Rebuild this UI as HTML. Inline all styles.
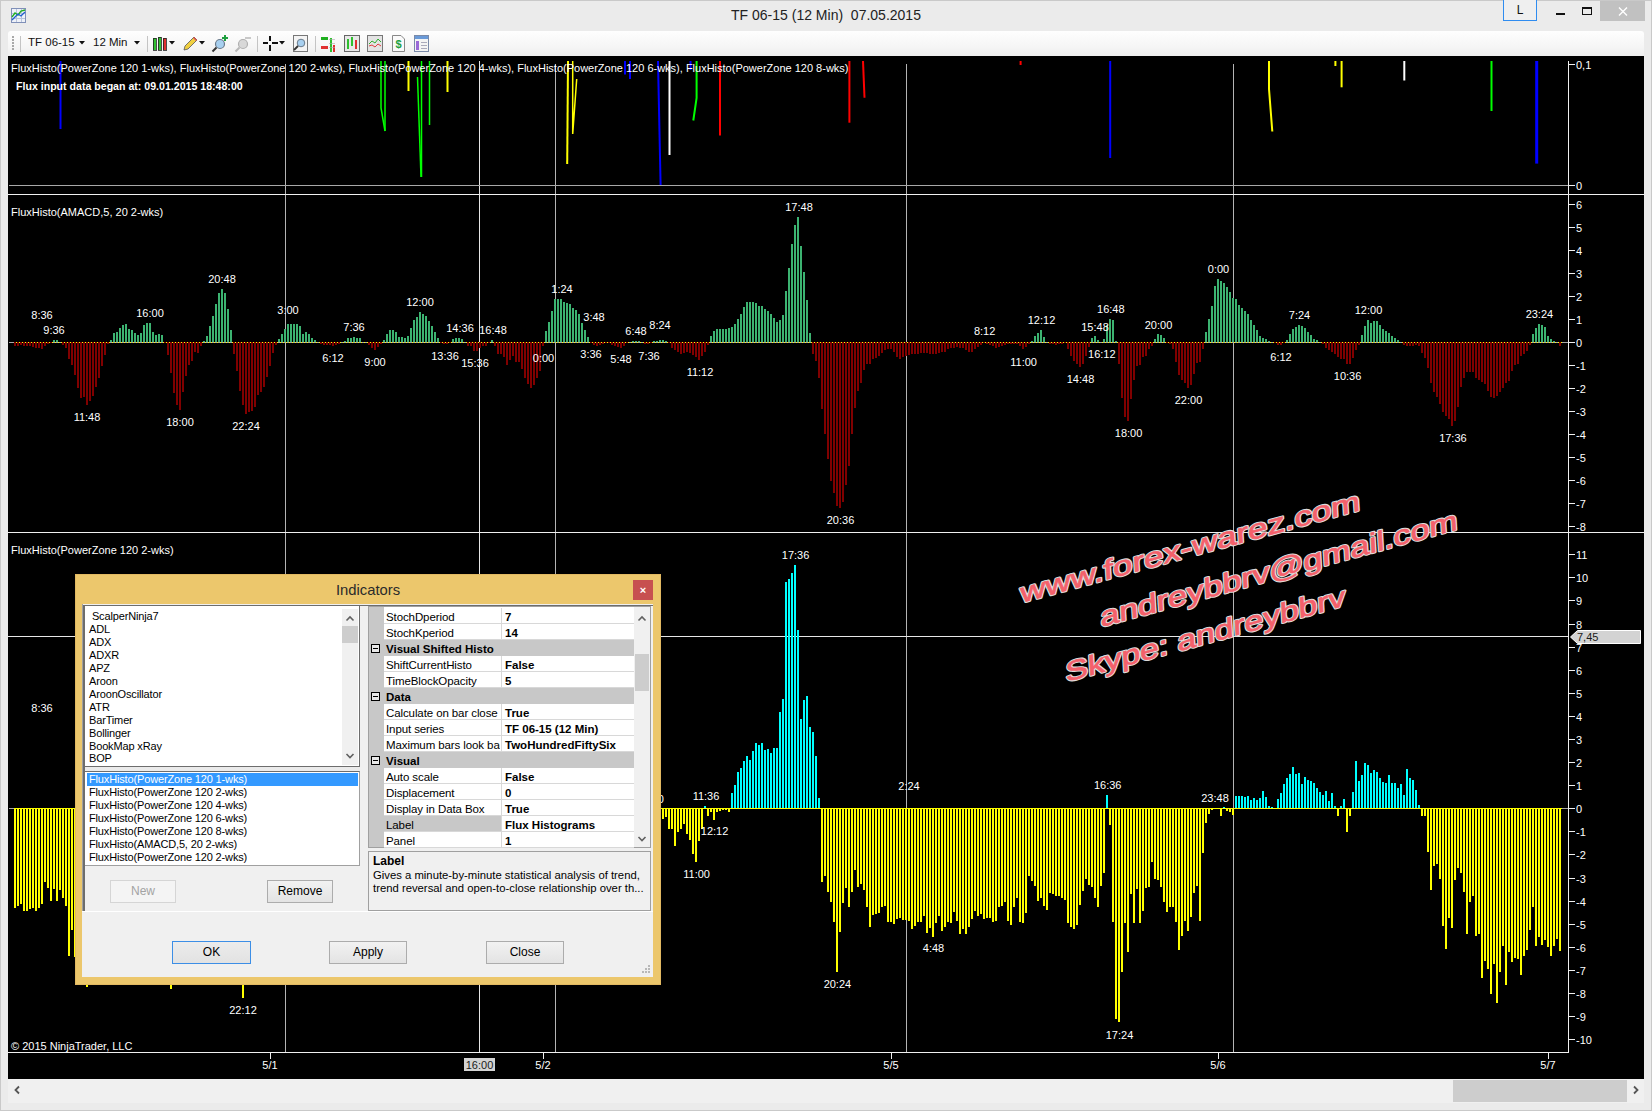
<!DOCTYPE html>
<html><head><meta charset="utf-8">
<style>
* { box-sizing: border-box; }
html, body { margin:0; padding:0; }
body { width:1652px; height:1111px; overflow:hidden; position:relative; background:#ebebeb; font-family:"Liberation Sans", sans-serif; }
.t { font-family:"Liberation Sans", sans-serif; font-size:11px; fill:#ffffff; }
.abs { position:absolute; }
.tx { white-space:nowrap; line-height:1.15; }
</style></head><body>
<svg width="1652" height="1111" viewBox="0 0 1652 1111" style="position:absolute;left:0;top:0" shape-rendering="crispEdges">
<rect x="8" y="56" width="1636" height="1023" fill="#000"/>
<rect x="285" y="64" width="1" height="988" fill="#b4b4b4"/>
<rect x="555" y="64" width="1" height="988" fill="#b4b4b4"/>
<rect x="906" y="64" width="1" height="988" fill="#b4b4b4"/>
<rect x="1233" y="64" width="1" height="988" fill="#b4b4b4"/>
<rect x="479" y="61" width="1" height="991" fill="#e6e6e6"/>
<rect x="8" y="636" width="1560" height="1" fill="#e6e6e6"/>
<rect x="8" y="194" width="1636" height="1" fill="#f0f0f0"/>
<rect x="8" y="532" width="1636" height="1" fill="#f0f0f0"/>
<rect x="8" y="1052" width="1561" height="1" fill="#f0f0f0"/>
<rect x="1568" y="61" width="1" height="992" fill="#f0f0f0"/>
<rect x="9" y="185" width="1559" height="1" fill="#a8a8a8"/>
<rect x="9" y="342" width="1559" height="1" fill="#a8a8a8"/>
<rect x="9" y="808" width="1559" height="1" fill="#a8a8a8"/>
<line x1="14" y1="342.5" x2="1562" y2="342.5" stroke="#ffff00" stroke-width="1" stroke-dasharray="1 2" stroke-dashoffset="-2"/>
<rect x="14" y="808" width="1548" height="1" fill="#ffff00"/>
<path d="M53 340h2V342h-2zM56 340h2V342h-2zM110 340h2V342h-2zM113 333h2V342h-2zM116 332h2V342h-2zM119 328h2V342h-2zM122 325h2V342h-2zM125 324h2V342h-2zM128 329h2V342h-2zM131 330h2V342h-2zM134 333h2V342h-2zM137 335h2V342h-2zM140 333h2V342h-2zM143 325h2V342h-2zM146 323h2V342h-2zM149 323h2V342h-2zM152 332h2V342h-2zM155 335h2V342h-2zM158 334h2V342h-2zM161 335h2V342h-2zM203 341h2V342h-2zM206 336h2V342h-2zM209 326h2V342h-2zM212 316h2V342h-2zM215 304h2V342h-2zM218 293h2V342h-2zM221 289h2V342h-2zM224 293h2V342h-2zM227 309h2V342h-2zM230 330h2V342h-2zM278 339h2V342h-2zM281 334h2V342h-2zM284 329h2V342h-2zM287 324h2V342h-2zM290 324h2V342h-2zM293 324h2V342h-2zM296 324h2V342h-2zM299 326h2V342h-2zM302 334h2V342h-2zM305 332h2V342h-2zM308 334h2V342h-2zM311 338h2V342h-2zM314 340h2V342h-2zM344 341h2V342h-2zM347 338h2V342h-2zM350 338h2V342h-2zM353 337h2V342h-2zM356 338h2V342h-2zM359 338h2V342h-2zM383 340h2V342h-2zM386 334h2V342h-2zM389 330h2V342h-2zM392 330h2V342h-2zM395 332h2V342h-2zM398 337h2V342h-2zM401 337h2V342h-2zM404 338h2V342h-2zM407 336h2V342h-2zM410 328h2V342h-2zM413 320h2V342h-2zM416 317h2V342h-2zM419 312h2V342h-2zM422 314h2V342h-2zM425 316h2V342h-2zM428 321h2V342h-2zM431 326h2V342h-2zM434 332h2V342h-2zM437 338h2V342h-2zM452 339h2V342h-2zM455 338h2V342h-2zM458 338h2V342h-2zM461 339h2V342h-2zM491 340h2V342h-2zM545 331h2V342h-2zM548 322h2V342h-2zM551 311h2V342h-2zM554 299h2V342h-2zM557 299h2V342h-2zM560 299h2V342h-2zM563 302h2V342h-2zM566 303h2V342h-2zM569 304h2V342h-2zM572 308h2V342h-2zM575 310h2V342h-2zM578 314h2V342h-2zM581 323h2V342h-2zM584 330h2V342h-2zM587 337h2V342h-2zM632 341h2V342h-2zM635 341h2V342h-2zM638 341h2V342h-2zM653 341h2V342h-2zM656 341h2V342h-2zM659 340h2V342h-2zM662 340h2V342h-2zM665 341h2V342h-2zM710 336h2V342h-2zM713 331h2V342h-2zM716 329h2V342h-2zM719 329h2V342h-2zM722 329h2V342h-2zM725 329h2V342h-2zM728 328h2V342h-2zM731 327h2V342h-2zM734 324h2V342h-2zM737 319h2V342h-2zM740 314h2V342h-2zM743 307h2V342h-2zM746 302h2V342h-2zM749 302h2V342h-2zM752 302h2V342h-2zM755 303h2V342h-2zM758 306h2V342h-2zM761 306h2V342h-2zM764 309h2V342h-2zM767 311h2V342h-2zM770 314h2V342h-2zM773 318h2V342h-2zM776 322h2V342h-2zM779 320h2V342h-2zM782 315h2V342h-2zM785 291h2V342h-2zM788 268h2V342h-2zM791 244h2V342h-2zM794 225h2V342h-2zM797 217h2V342h-2zM800 246h2V342h-2zM803 272h2V342h-2zM806 300h2V342h-2zM809 333h2V342h-2zM1031 341h2V342h-2zM1034 336h2V342h-2zM1037 333h2V342h-2zM1040 330h2V342h-2zM1043 337h2V342h-2zM1091 338h2V342h-2zM1094 336h2V342h-2zM1097 340h2V342h-2zM1103 339h2V342h-2zM1106 325h2V342h-2zM1109 319h2V342h-2zM1112 320h2V342h-2zM1115 341h2V342h-2zM1154 339h2V342h-2zM1157 334h2V342h-2zM1160 335h2V342h-2zM1163 338h2V342h-2zM1205 332h2V342h-2zM1208 319h2V342h-2zM1211 306h2V342h-2zM1214 286h2V342h-2zM1217 279h2V342h-2zM1220 281h2V342h-2zM1223 283h2V342h-2zM1226 287h2V342h-2zM1229 292h2V342h-2zM1232 298h2V342h-2zM1235 299h2V342h-2zM1238 305h2V342h-2zM1241 308h2V342h-2zM1244 311h2V342h-2zM1247 314h2V342h-2zM1250 320h2V342h-2zM1253 325h2V342h-2zM1256 330h2V342h-2zM1259 336h2V342h-2zM1262 338h2V342h-2zM1265 339h2V342h-2zM1268 341h2V342h-2zM1286 340h2V342h-2zM1289 334h2V342h-2zM1292 329h2V342h-2zM1295 327h2V342h-2zM1298 325h2V342h-2zM1301 326h2V342h-2zM1304 328h2V342h-2zM1307 332h2V342h-2zM1310 335h2V342h-2zM1313 339h2V342h-2zM1316 340h2V342h-2zM1361 335h2V342h-2zM1364 326h2V342h-2zM1367 320h2V342h-2zM1370 323h2V342h-2zM1373 321h2V342h-2zM1376 321h2V342h-2zM1379 325h2V342h-2zM1382 329h2V342h-2zM1385 331h2V342h-2zM1388 333h2V342h-2zM1391 336h2V342h-2zM1394 338h2V342h-2zM1397 340h2V342h-2zM1532 334h2V342h-2zM1535 328h2V342h-2zM1538 324h2V342h-2zM1541 325h2V342h-2zM1544 327h2V342h-2zM1547 336h2V342h-2zM1550 339h2V342h-2zM1553 341h2V342h-2z" fill="#3cb371"/>
<path d="M14 342h2V346h-2zM17 342h2V346h-2zM20 342h2V345h-2zM23 342h2V346h-2zM26 342h2V346h-2zM29 342h2V346h-2zM32 342h2V347h-2zM35 342h2V348h-2zM38 342h2V348h-2zM41 342h2V349h-2zM44 342h2V346h-2zM47 342h2V344h-2zM50 342h2V343h-2zM62 342h2V345h-2zM65 342h2V348h-2zM68 342h2V359h-2zM71 342h2V365h-2zM74 342h2V375h-2zM77 342h2V388h-2zM80 342h2V398h-2zM83 342h2V397h-2zM86 342h2V405h-2zM89 342h2V401h-2zM92 342h2V396h-2zM95 342h2V387h-2zM98 342h2V378h-2zM101 342h2V366h-2zM104 342h2V355h-2zM107 342h2V344h-2zM164 342h2V343h-2zM167 342h2V355h-2zM170 342h2V373h-2zM173 342h2V393h-2zM176 342h2V405h-2zM179 342h2V410h-2zM182 342h2V392h-2zM185 342h2V376h-2zM188 342h2V365h-2zM191 342h2V361h-2zM194 342h2V352h-2zM197 342h2V353h-2zM200 342h2V346h-2zM233 342h2V354h-2zM236 342h2V371h-2zM239 342h2V391h-2zM242 342h2V405h-2zM245 342h2V414h-2zM248 342h2V412h-2zM251 342h2V411h-2zM254 342h2V407h-2zM257 342h2V395h-2zM260 342h2V392h-2zM263 342h2V387h-2zM266 342h2V377h-2zM269 342h2V366h-2zM272 342h2V353h-2zM275 342h2V345h-2zM320 342h2V344h-2zM323 342h2V345h-2zM326 342h2V345h-2zM329 342h2V345h-2zM332 342h2V346h-2zM335 342h2V345h-2zM338 342h2V344h-2zM368 342h2V345h-2zM371 342h2V348h-2zM374 342h2V350h-2zM377 342h2V347h-2zM380 342h2V344h-2zM440 342h2V343h-2zM443 342h2V344h-2zM446 342h2V344h-2zM449 342h2V343h-2zM467 342h2V346h-2zM470 342h2V346h-2zM473 342h2V351h-2zM476 342h2V351h-2zM479 342h2V348h-2zM482 342h2V346h-2zM485 342h2V346h-2zM488 342h2V343h-2zM494 342h2V346h-2zM497 342h2V354h-2zM500 342h2V354h-2zM503 342h2V357h-2zM506 342h2V365h-2zM509 342h2V360h-2zM512 342h2V356h-2zM515 342h2V362h-2zM518 342h2V362h-2zM521 342h2V369h-2zM524 342h2V378h-2zM527 342h2V384h-2zM530 342h2V388h-2zM533 342h2V385h-2zM536 342h2V378h-2zM539 342h2V371h-2zM542 342h2V346h-2zM590 342h2V343h-2zM593 342h2V345h-2zM596 342h2V346h-2zM599 342h2V345h-2zM602 342h2V344h-2zM605 342h2V343h-2zM608 342h2V343h-2zM611 342h2V345h-2zM614 342h2V346h-2zM617 342h2V347h-2zM620 342h2V348h-2zM623 342h2V346h-2zM626 342h2V343h-2zM644 342h2V344h-2zM647 342h2V344h-2zM650 342h2V343h-2zM668 342h2V343h-2zM671 342h2V348h-2zM674 342h2V350h-2zM677 342h2V352h-2zM680 342h2V354h-2zM683 342h2V353h-2zM686 342h2V352h-2zM689 342h2V353h-2zM692 342h2V355h-2zM695 342h2V357h-2zM698 342h2V360h-2zM701 342h2V356h-2zM704 342h2V352h-2zM707 342h2V345h-2zM812 342h2V354h-2zM815 342h2V361h-2zM818 342h2V378h-2zM821 342h2V409h-2zM824 342h2V434h-2zM827 342h2V459h-2zM830 342h2V481h-2zM833 342h2V493h-2zM836 342h2V506h-2zM839 342h2V508h-2zM842 342h2V502h-2zM845 342h2V485h-2zM848 342h2V466h-2zM851 342h2V434h-2zM854 342h2V408h-2zM857 342h2V391h-2zM860 342h2V383h-2zM863 342h2V370h-2zM866 342h2V364h-2zM869 342h2V364h-2zM872 342h2V359h-2zM875 342h2V358h-2zM878 342h2V356h-2zM881 342h2V353h-2zM884 342h2V350h-2zM887 342h2V349h-2zM890 342h2V349h-2zM893 342h2V352h-2zM896 342h2V357h-2zM899 342h2V359h-2zM902 342h2V357h-2zM905 342h2V356h-2zM908 342h2V355h-2zM911 342h2V354h-2zM914 342h2V354h-2zM917 342h2V354h-2zM920 342h2V353h-2zM923 342h2V353h-2zM926 342h2V353h-2zM929 342h2V354h-2zM932 342h2V354h-2zM935 342h2V354h-2zM938 342h2V353h-2zM941 342h2V352h-2zM944 342h2V352h-2zM947 342h2V349h-2zM950 342h2V348h-2zM953 342h2V348h-2zM956 342h2V347h-2zM959 342h2V348h-2zM962 342h2V348h-2zM965 342h2V350h-2zM968 342h2V352h-2zM971 342h2V352h-2zM974 342h2V349h-2zM977 342h2V347h-2zM980 342h2V345h-2zM983 342h2V343h-2zM986 342h2V344h-2zM989 342h2V345h-2zM992 342h2V346h-2zM995 342h2V348h-2zM998 342h2V347h-2zM1001 342h2V346h-2zM1004 342h2V345h-2zM1007 342h2V344h-2zM1010 342h2V344h-2zM1013 342h2V344h-2zM1016 342h2V344h-2zM1019 342h2V346h-2zM1022 342h2V349h-2zM1025 342h2V347h-2zM1028 342h2V344h-2zM1049 342h2V344h-2zM1052 342h2V344h-2zM1055 342h2V345h-2zM1058 342h2V344h-2zM1061 342h2V344h-2zM1064 342h2V343h-2zM1067 342h2V349h-2zM1070 342h2V356h-2zM1073 342h2V361h-2zM1076 342h2V364h-2zM1079 342h2V367h-2zM1082 342h2V364h-2zM1085 342h2V356h-2zM1088 342h2V347h-2zM1118 342h2V364h-2zM1121 342h2V398h-2zM1124 342h2V417h-2zM1127 342h2V421h-2zM1130 342h2V399h-2zM1133 342h2V380h-2zM1136 342h2V366h-2zM1139 342h2V365h-2zM1142 342h2V357h-2zM1145 342h2V356h-2zM1148 342h2V349h-2zM1151 342h2V346h-2zM1166 342h2V343h-2zM1169 342h2V344h-2zM1172 342h2V349h-2zM1175 342h2V362h-2zM1178 342h2V375h-2zM1181 342h2V380h-2zM1184 342h2V383h-2zM1187 342h2V388h-2zM1190 342h2V385h-2zM1193 342h2V374h-2zM1196 342h2V363h-2zM1199 342h2V362h-2zM1202 342h2V349h-2zM1274 342h2V343h-2zM1277 342h2V345h-2zM1280 342h2V345h-2zM1283 342h2V343h-2zM1322 342h2V344h-2zM1325 342h2V348h-2zM1328 342h2V350h-2zM1331 342h2V352h-2zM1334 342h2V354h-2zM1337 342h2V357h-2zM1340 342h2V359h-2zM1343 342h2V359h-2zM1346 342h2V364h-2zM1349 342h2V364h-2zM1352 342h2V358h-2zM1355 342h2V350h-2zM1358 342h2V345h-2zM1403 342h2V345h-2zM1406 342h2V346h-2zM1409 342h2V346h-2zM1412 342h2V346h-2zM1415 342h2V345h-2zM1418 342h2V346h-2zM1421 342h2V353h-2zM1424 342h2V358h-2zM1427 342h2V368h-2zM1430 342h2V383h-2zM1433 342h2V392h-2zM1436 342h2V397h-2zM1439 342h2V404h-2zM1442 342h2V412h-2zM1445 342h2V416h-2zM1448 342h2V419h-2zM1451 342h2V426h-2zM1454 342h2V421h-2zM1457 342h2V407h-2zM1460 342h2V387h-2zM1463 342h2V378h-2zM1466 342h2V372h-2zM1469 342h2V372h-2zM1472 342h2V372h-2zM1475 342h2V378h-2zM1478 342h2V380h-2zM1481 342h2V382h-2zM1484 342h2V384h-2zM1487 342h2V391h-2zM1490 342h2V397h-2zM1493 342h2V398h-2zM1496 342h2V396h-2zM1499 342h2V392h-2zM1502 342h2V388h-2zM1505 342h2V383h-2zM1508 342h2V381h-2zM1511 342h2V371h-2zM1514 342h2V365h-2zM1517 342h2V364h-2zM1520 342h2V356h-2zM1523 342h2V354h-2zM1526 342h2V351h-2zM1529 342h2V345h-2zM1559 342h2V346h-2z" fill="#800000"/>
<path d="M704 806h2V808h-2zM731 793h2V808h-2zM734 785h2V808h-2zM737 772h2V808h-2zM740 768h2V808h-2zM743 761h2V808h-2zM746 756h2V808h-2zM749 760h2V808h-2zM752 751h2V808h-2zM755 743h2V808h-2zM758 745h2V808h-2zM761 743h2V808h-2zM764 750h2V808h-2zM767 749h2V808h-2zM770 753h2V808h-2zM773 748h2V808h-2zM776 748h2V808h-2zM779 712h2V808h-2zM782 699h2V808h-2zM785 582h2V808h-2zM788 579h2V808h-2zM791 573h2V808h-2zM794 565h2V808h-2zM797 630h2V808h-2zM800 719h2V808h-2zM803 700h2V808h-2zM806 696h2V808h-2zM809 727h2V808h-2zM812 732h2V808h-2zM815 756h2V808h-2zM818 798h2V808h-2zM1106 795h2V808h-2zM1223 807h2V808h-2zM1235 796h2V808h-2zM1238 796h2V808h-2zM1241 796h2V808h-2zM1244 797h2V808h-2zM1247 796h2V808h-2zM1250 800h2V808h-2zM1253 798h2V808h-2zM1256 800h2V808h-2zM1259 798h2V808h-2zM1262 791h2V808h-2zM1265 797h2V808h-2zM1268 806h2V808h-2zM1271 807h2V808h-2zM1277 799h2V808h-2zM1280 793h2V808h-2zM1283 784h2V808h-2zM1286 778h2V808h-2zM1289 774h2V808h-2zM1292 767h2V808h-2zM1295 774h2V808h-2zM1298 773h2V808h-2zM1301 784h2V808h-2zM1304 777h2V808h-2zM1307 780h2V808h-2zM1310 781h2V808h-2zM1313 783h2V808h-2zM1316 788h2V808h-2zM1319 792h2V808h-2zM1322 795h2V808h-2zM1325 791h2V808h-2zM1328 801h2V808h-2zM1331 793h2V808h-2zM1334 806h2V808h-2zM1340 806h2V808h-2zM1343 799h2V808h-2zM1352 792h2V808h-2zM1355 761h2V808h-2zM1358 781h2V808h-2zM1361 775h2V808h-2zM1364 763h2V808h-2zM1367 765h2V808h-2zM1370 773h2V808h-2zM1373 770h2V808h-2zM1376 772h2V808h-2zM1379 778h2V808h-2zM1382 782h2V808h-2zM1385 783h2V808h-2zM1388 775h2V808h-2zM1391 783h2V808h-2zM1394 783h2V808h-2zM1397 788h2V808h-2zM1400 784h2V808h-2zM1403 795h2V808h-2zM1406 769h2V808h-2zM1409 778h2V808h-2zM1412 780h2V808h-2zM1415 790h2V808h-2zM1418 805h2V808h-2z" fill="#00ffff"/>
<path d="M14 808h2V908h-2zM17 808h2V906h-2zM20 808h2V904h-2zM23 808h2V911h-2zM26 808h2V911h-2zM29 808h2V909h-2zM32 808h2V908h-2zM35 808h2V911h-2zM38 808h2V908h-2zM41 808h2V904h-2zM44 808h2V882h-2zM47 808h2V888h-2zM50 808h2V901h-2zM53 808h2V889h-2zM56 808h2V901h-2zM59 808h2V890h-2zM62 808h2V898h-2zM65 808h2V906h-2zM68 808h2V956h-2zM71 808h2V930h-2zM74 808h2V957h-2zM77 808h2V958h-2zM80 808h2V968h-2zM83 808h2V978h-2zM86 808h2V987h-2zM89 808h2V968h-2zM92 808h2V958h-2zM95 808h2V948h-2zM98 808h2V938h-2zM101 808h2V928h-2zM104 808h2V930h-2zM107 808h2V932h-2zM110 808h2V933h-2zM113 808h2V935h-2zM116 808h2V937h-2zM119 808h2V939h-2zM122 808h2V941h-2zM125 808h2V943h-2zM128 808h2V944h-2zM131 808h2V946h-2zM134 808h2V948h-2zM137 808h2V950h-2zM140 808h2V952h-2zM143 808h2V953h-2zM146 808h2V955h-2zM149 808h2V957h-2zM152 808h2V959h-2zM155 808h2V961h-2zM158 808h2V963h-2zM161 808h2V964h-2zM164 808h2V966h-2zM167 808h2V968h-2zM170 808h2V989h-2zM173 808h2V968h-2zM176 808h2V968h-2zM179 808h2V967h-2zM182 808h2V967h-2zM185 808h2V966h-2zM188 808h2V966h-2zM191 808h2V965h-2zM194 808h2V965h-2zM197 808h2V964h-2zM200 808h2V964h-2zM203 808h2V963h-2zM206 808h2V963h-2zM209 808h2V962h-2zM212 808h2V962h-2zM215 808h2V961h-2zM218 808h2V961h-2zM221 808h2V960h-2zM224 808h2V960h-2zM227 808h2V959h-2zM230 808h2V959h-2zM233 808h2V958h-2zM236 808h2V958h-2zM239 808h2V978h-2zM242 808h2V998h-2zM245 808h2V978h-2zM248 808h2V958h-2zM251 808h2V957h-2zM254 808h2V956h-2zM257 808h2V955h-2zM260 808h2V954h-2zM263 808h2V953h-2zM266 808h2V952h-2zM269 808h2V952h-2zM272 808h2V951h-2zM275 808h2V950h-2zM278 808h2V949h-2zM281 808h2V948h-2zM284 808h2V947h-2zM287 808h2V946h-2zM290 808h2V945h-2zM293 808h2V944h-2zM296 808h2V943h-2zM299 808h2V942h-2zM302 808h2V941h-2zM305 808h2V940h-2zM308 808h2V940h-2zM311 808h2V939h-2zM314 808h2V938h-2zM317 808h2V937h-2zM320 808h2V936h-2zM323 808h2V935h-2zM326 808h2V934h-2zM329 808h2V933h-2zM332 808h2V932h-2zM335 808h2V931h-2zM338 808h2V930h-2zM341 808h2V929h-2zM344 808h2V928h-2zM347 808h2V928h-2zM350 808h2V927h-2zM353 808h2V926h-2zM356 808h2V925h-2zM359 808h2V924h-2zM362 808h2V923h-2zM365 808h2V922h-2zM368 808h2V921h-2zM371 808h2V920h-2zM374 808h2V919h-2zM377 808h2V918h-2zM380 808h2V917h-2zM383 808h2V916h-2zM386 808h2V916h-2zM389 808h2V915h-2zM392 808h2V914h-2zM395 808h2V913h-2zM398 808h2V912h-2zM401 808h2V911h-2zM404 808h2V910h-2zM407 808h2V909h-2zM410 808h2V908h-2zM413 808h2V907h-2zM416 808h2V906h-2zM419 808h2V905h-2zM422 808h2V904h-2zM425 808h2V904h-2zM428 808h2V903h-2zM431 808h2V902h-2zM434 808h2V901h-2zM437 808h2V900h-2zM440 808h2V899h-2zM443 808h2V898h-2zM446 808h2V897h-2zM449 808h2V896h-2zM452 808h2V895h-2zM455 808h2V894h-2zM458 808h2V893h-2zM461 808h2V892h-2zM464 808h2V892h-2zM467 808h2V891h-2zM470 808h2V890h-2zM473 808h2V889h-2zM476 808h2V888h-2zM479 808h2V887h-2zM482 808h2V886h-2zM485 808h2V885h-2zM488 808h2V884h-2zM491 808h2V883h-2zM494 808h2V882h-2zM497 808h2V881h-2zM500 808h2V880h-2zM503 808h2V880h-2zM506 808h2V879h-2zM509 808h2V878h-2zM512 808h2V877h-2zM515 808h2V876h-2zM518 808h2V875h-2zM521 808h2V874h-2zM524 808h2V873h-2zM527 808h2V872h-2zM530 808h2V871h-2zM533 808h2V870h-2zM536 808h2V869h-2zM539 808h2V868h-2zM542 808h2V868h-2zM545 808h2V867h-2zM548 808h2V866h-2zM551 808h2V865h-2zM554 808h2V864h-2zM557 808h2V863h-2zM560 808h2V862h-2zM563 808h2V861h-2zM566 808h2V860h-2zM569 808h2V859h-2zM572 808h2V858h-2zM575 808h2V857h-2zM578 808h2V856h-2zM581 808h2V856h-2zM584 808h2V855h-2zM587 808h2V854h-2zM590 808h2V853h-2zM593 808h2V852h-2zM596 808h2V851h-2zM599 808h2V850h-2zM602 808h2V849h-2zM605 808h2V848h-2zM608 808h2V847h-2zM611 808h2V846h-2zM614 808h2V845h-2zM617 808h2V844h-2zM620 808h2V844h-2zM623 808h2V843h-2zM626 808h2V842h-2zM629 808h2V841h-2zM632 808h2V840h-2zM635 808h2V839h-2zM638 808h2V838h-2zM641 808h2V832h-2zM644 808h2V826h-2zM647 808h2V826h-2zM650 808h2V827h-2zM653 808h2V824h-2zM656 808h2V822h-2zM659 808h2V820h-2zM662 808h2V819h-2zM665 808h2V817h-2zM668 808h2V829h-2zM671 808h2V829h-2zM674 808h2V846h-2zM677 808h2V832h-2zM680 808h2V829h-2zM683 808h2V824h-2zM686 808h2V834h-2zM689 808h2V840h-2zM692 808h2V854h-2zM695 808h2V862h-2zM698 808h2V841h-2zM701 808h2V829h-2zM707 808h2V816h-2zM710 808h2V812h-2zM713 808h2V820h-2zM716 808h2V812h-2zM719 808h2V811h-2zM722 808h2V810h-2zM725 808h2V810h-2zM728 808h2V812h-2zM821 808h2V882h-2zM824 808h2V876h-2zM827 808h2V892h-2zM830 808h2V902h-2zM833 808h2V922h-2zM836 808h2V972h-2zM839 808h2V932h-2zM842 808h2V903h-2zM845 808h2V888h-2zM848 808h2V907h-2zM851 808h2V892h-2zM854 808h2V870h-2zM857 808h2V887h-2zM860 808h2V884h-2zM863 808h2V890h-2zM866 808h2V907h-2zM869 808h2V927h-2zM872 808h2V915h-2zM875 808h2V914h-2zM878 808h2V913h-2zM881 808h2V907h-2zM884 808h2V906h-2zM887 808h2V922h-2zM890 808h2V922h-2zM893 808h2V924h-2zM896 808h2V919h-2zM899 808h2V918h-2zM902 808h2V920h-2zM905 808h2V920h-2zM908 808h2V921h-2zM911 808h2V929h-2zM914 808h2V926h-2zM917 808h2V922h-2zM920 808h2V922h-2zM923 808h2V916h-2zM926 808h2V933h-2zM929 808h2V928h-2zM932 808h2V937h-2zM935 808h2V923h-2zM938 808h2V916h-2zM941 808h2V931h-2zM944 808h2V927h-2zM947 808h2V922h-2zM950 808h2V923h-2zM953 808h2V912h-2zM956 808h2V921h-2zM959 808h2V934h-2zM962 808h2V929h-2zM965 808h2V934h-2zM968 808h2V927h-2zM971 808h2V919h-2zM974 808h2V911h-2zM977 808h2V916h-2zM980 808h2V914h-2zM983 808h2V919h-2zM986 808h2V918h-2zM989 808h2V918h-2zM992 808h2V922h-2zM995 808h2V921h-2zM998 808h2V907h-2zM1001 808h2V906h-2zM1004 808h2V902h-2zM1007 808h2V921h-2zM1010 808h2V925h-2zM1013 808h2V907h-2zM1016 808h2V898h-2zM1019 808h2V922h-2zM1022 808h2V923h-2zM1025 808h2V913h-2zM1028 808h2V876h-2zM1031 808h2V881h-2zM1034 808h2V886h-2zM1037 808h2V901h-2zM1040 808h2V898h-2zM1043 808h2V906h-2zM1046 808h2V910h-2zM1049 808h2V893h-2zM1052 808h2V894h-2zM1055 808h2V896h-2zM1058 808h2V896h-2zM1061 808h2V898h-2zM1064 808h2V900h-2zM1067 808h2V923h-2zM1070 808h2V927h-2zM1073 808h2V929h-2zM1076 808h2V925h-2zM1079 808h2V905h-2zM1082 808h2V891h-2zM1085 808h2V879h-2zM1088 808h2V885h-2zM1091 808h2V887h-2zM1094 808h2V898h-2zM1097 808h2V907h-2zM1100 808h2V886h-2zM1103 808h2V873h-2zM1109 808h2V825h-2zM1112 808h2V922h-2zM1115 808h2V1019h-2zM1118 808h2V1022h-2zM1121 808h2V972h-2zM1124 808h2V923h-2zM1127 808h2V952h-2zM1130 808h2V894h-2zM1133 808h2V923h-2zM1136 808h2V889h-2zM1139 808h2V923h-2zM1142 808h2V911h-2zM1145 808h2V888h-2zM1148 808h2V887h-2zM1151 808h2V862h-2zM1154 808h2V879h-2zM1157 808h2V880h-2zM1160 808h2V887h-2zM1163 808h2V902h-2zM1166 808h2V912h-2zM1169 808h2V907h-2zM1172 808h2V907h-2zM1175 808h2V922h-2zM1178 808h2V950h-2zM1181 808h2V936h-2zM1184 808h2V921h-2zM1187 808h2V931h-2zM1190 808h2V917h-2zM1193 808h2V893h-2zM1196 808h2V886h-2zM1199 808h2V921h-2zM1202 808h2V853h-2zM1205 808h2V823h-2zM1208 808h2V814h-2zM1211 808h2V810h-2zM1214 808h2V809h-2zM1220 808h2V816h-2zM1226 808h2V811h-2zM1229 808h2V812h-2zM1232 808h2V815h-2zM1337 808h2V816h-2zM1346 808h2V832h-2zM1349 808h2V816h-2zM1421 808h2V816h-2zM1424 808h2V816h-2zM1427 808h2V852h-2zM1430 808h2V890h-2zM1433 808h2V866h-2zM1436 808h2V864h-2zM1439 808h2V879h-2zM1442 808h2V926h-2zM1445 808h2V949h-2zM1448 808h2V918h-2zM1451 808h2V928h-2zM1454 808h2V880h-2zM1457 808h2V868h-2zM1460 808h2V873h-2zM1463 808h2V892h-2zM1466 808h2V934h-2zM1469 808h2V902h-2zM1472 808h2V896h-2zM1475 808h2V936h-2zM1478 808h2V934h-2zM1481 808h2V978h-2zM1484 808h2V961h-2zM1487 808h2V969h-2zM1490 808h2V994h-2zM1493 808h2V964h-2zM1496 808h2V1003h-2zM1499 808h2V972h-2zM1502 808h2V946h-2zM1505 808h2V985h-2zM1508 808h2V952h-2zM1511 808h2V962h-2zM1514 808h2V958h-2zM1517 808h2V959h-2zM1520 808h2V975h-2zM1523 808h2V956h-2zM1526 808h2V950h-2zM1529 808h2V930h-2zM1532 808h2V907h-2zM1535 808h2V946h-2zM1538 808h2V937h-2zM1541 808h2V945h-2zM1544 808h2V940h-2zM1547 808h2V947h-2zM1550 808h2V956h-2zM1553 808h2V946h-2zM1556 808h2V939h-2zM1559 808h2V951h-2z" fill="#ffff00"/>
<path d="M60.5 61 L60.5 129" stroke="#0000ff" stroke-width="2" fill="none" shape-rendering="auto"/>
<path d="M381 61 L381 108 L385 131" stroke="#00ff00" stroke-width="1.5" fill="none" shape-rendering="auto"/>
<path d="M385 61 L385 131" stroke="#00ff00" stroke-width="1.5" fill="none" shape-rendering="auto"/>
<path d="M417.5 77 L421 177" stroke="#00ff00" stroke-width="1.5" fill="none" shape-rendering="auto"/>
<path d="M421.5 61 L421.5 177" stroke="#00ff00" stroke-width="1.5" fill="none" shape-rendering="auto"/>
<path d="M429.5 61 L429.5 125" stroke="#00ff00" stroke-width="1.5" fill="none" shape-rendering="auto"/>
<path d="M408.5 61 L408.5 91" stroke="#ffff00" stroke-width="2" fill="none" shape-rendering="auto"/>
<path d="M447.5 61 L447.5 92" stroke="#ffff00" stroke-width="2" fill="none" shape-rendering="auto"/>
<path d="M568 61 L567.2 164" stroke="#ffff00" stroke-width="2" fill="none" shape-rendering="auto"/>
<path d="M572.7 61 L572.7 134 L576.7 79" stroke="#ffff00" stroke-width="1.5" fill="none" shape-rendering="auto"/>
<path d="M625 61 L625 74.5" stroke="#0000ff" stroke-width="2" fill="none" shape-rendering="auto"/>
<path d="M630 61 L630 79" stroke="#0000ff" stroke-width="2" fill="none" shape-rendering="auto"/>
<path d="M658 61 L660.6 185" stroke="#0000ff" stroke-width="2" fill="none" shape-rendering="auto"/>
<path d="M669.5 61 L669.5 155" stroke="#ffffff" stroke-width="2" fill="none" shape-rendering="auto"/>
<path d="M690.5 61 L690.5 70" stroke="#0000ff" stroke-width="2" fill="none" shape-rendering="auto"/>
<path d="M696.6 61 L696.6 98 L693.3 120.5" stroke="#00ff00" stroke-width="2" fill="none" shape-rendering="auto"/>
<path d="M720 61 L720 135.5" stroke="#ff0000" stroke-width="2" fill="none" shape-rendering="auto"/>
<path d="M849.4 61 L849.4 122.7" stroke="#ff0000" stroke-width="2" fill="none" shape-rendering="auto"/>
<path d="M863 61 L864.5 97.7" stroke="#ff0000" stroke-width="2" fill="none" shape-rendering="auto"/>
<path d="M1020.6 61 L1020.6 65" stroke="#ff0000" stroke-width="2" fill="none" shape-rendering="auto"/>
<path d="M1110.2 61 L1110.2 158" stroke="#0000ff" stroke-width="2" fill="none" shape-rendering="auto"/>
<path d="M1269 61 L1269 89 L1272.3 131.5" stroke="#ffff00" stroke-width="2" fill="none" shape-rendering="auto"/>
<path d="M1335.4 61 L1335.4 66" stroke="#ffff00" stroke-width="2" fill="none" shape-rendering="auto"/>
<path d="M1341.6 61 L1341.6 87.3" stroke="#ffff00" stroke-width="2" fill="none" shape-rendering="auto"/>
<path d="M1404.3 61 L1404.3 80.5" stroke="#ffffff" stroke-width="2" fill="none" shape-rendering="auto"/>
<path d="M1491.5 61 L1491.5 111" stroke="#00ff00" stroke-width="2" fill="none" shape-rendering="auto"/>
<path d="M1536.7 61 L1536.7 163.6" stroke="#0000ff" stroke-width="3" fill="none" shape-rendering="auto"/>
<rect x="1569" y="64" width="6" height="1" fill="#f0f0f0"/>
<text x="1576" y="69" class="t">0,1</text>
<rect x="1569" y="185" width="6" height="1" fill="#f0f0f0"/>
<text x="1576" y="190" class="t">0</text>
<rect x="1569" y="204" width="6" height="1" fill="#f0f0f0"/>
<text x="1576" y="209" class="t">6</text>
<rect x="1569" y="227" width="6" height="1" fill="#f0f0f0"/>
<text x="1576" y="232" class="t">5</text>
<rect x="1569" y="250" width="6" height="1" fill="#f0f0f0"/>
<text x="1576" y="255" class="t">4</text>
<rect x="1569" y="273" width="6" height="1" fill="#f0f0f0"/>
<text x="1576" y="278" class="t">3</text>
<rect x="1569" y="296" width="6" height="1" fill="#f0f0f0"/>
<text x="1576" y="301" class="t">2</text>
<rect x="1569" y="319" width="6" height="1" fill="#f0f0f0"/>
<text x="1576" y="324" class="t">1</text>
<rect x="1569" y="342" width="6" height="1" fill="#f0f0f0"/>
<text x="1576" y="347" class="t">0</text>
<rect x="1569" y="365" width="6" height="1" fill="#f0f0f0"/>
<text x="1576" y="370" class="t">-1</text>
<rect x="1569" y="388" width="6" height="1" fill="#f0f0f0"/>
<text x="1576" y="393" class="t">-2</text>
<rect x="1569" y="411" width="6" height="1" fill="#f0f0f0"/>
<text x="1576" y="416" class="t">-3</text>
<rect x="1569" y="434" width="6" height="1" fill="#f0f0f0"/>
<text x="1576" y="439" class="t">-4</text>
<rect x="1569" y="457" width="6" height="1" fill="#f0f0f0"/>
<text x="1576" y="462" class="t">-5</text>
<rect x="1569" y="480" width="6" height="1" fill="#f0f0f0"/>
<text x="1576" y="485" class="t">-6</text>
<rect x="1569" y="503" width="6" height="1" fill="#f0f0f0"/>
<text x="1576" y="508" class="t">-7</text>
<rect x="1569" y="526" width="6" height="1" fill="#f0f0f0"/>
<text x="1576" y="531" class="t">-8</text>
<rect x="1569" y="554" width="6" height="1" fill="#f0f0f0"/>
<text x="1576" y="559" class="t">11</text>
<rect x="1569" y="577" width="6" height="1" fill="#f0f0f0"/>
<text x="1576" y="582" class="t">10</text>
<rect x="1569" y="600" width="6" height="1" fill="#f0f0f0"/>
<text x="1576" y="605" class="t">9</text>
<rect x="1569" y="624" width="6" height="1" fill="#f0f0f0"/>
<text x="1576" y="629" class="t">8</text>
<rect x="1569" y="647" width="6" height="1" fill="#f0f0f0"/>
<text x="1576" y="652" class="t">7</text>
<rect x="1569" y="670" width="6" height="1" fill="#f0f0f0"/>
<text x="1576" y="675" class="t">6</text>
<rect x="1569" y="693" width="6" height="1" fill="#f0f0f0"/>
<text x="1576" y="698" class="t">5</text>
<rect x="1569" y="716" width="6" height="1" fill="#f0f0f0"/>
<text x="1576" y="721" class="t">4</text>
<rect x="1569" y="739" width="6" height="1" fill="#f0f0f0"/>
<text x="1576" y="744" class="t">3</text>
<rect x="1569" y="762" width="6" height="1" fill="#f0f0f0"/>
<text x="1576" y="767" class="t">2</text>
<rect x="1569" y="785" width="6" height="1" fill="#f0f0f0"/>
<text x="1576" y="790" class="t">1</text>
<rect x="1569" y="808" width="6" height="1" fill="#f0f0f0"/>
<text x="1576" y="813" class="t">0</text>
<rect x="1569" y="831" width="6" height="1" fill="#f0f0f0"/>
<text x="1576" y="836" class="t">-1</text>
<rect x="1569" y="854" width="6" height="1" fill="#f0f0f0"/>
<text x="1576" y="859" class="t">-2</text>
<rect x="1569" y="878" width="6" height="1" fill="#f0f0f0"/>
<text x="1576" y="883" class="t">-3</text>
<rect x="1569" y="901" width="6" height="1" fill="#f0f0f0"/>
<text x="1576" y="906" class="t">-4</text>
<rect x="1569" y="924" width="6" height="1" fill="#f0f0f0"/>
<text x="1576" y="929" class="t">-5</text>
<rect x="1569" y="947" width="6" height="1" fill="#f0f0f0"/>
<text x="1576" y="952" class="t">-6</text>
<rect x="1569" y="970" width="6" height="1" fill="#f0f0f0"/>
<text x="1576" y="975" class="t">-7</text>
<rect x="1569" y="993" width="6" height="1" fill="#f0f0f0"/>
<text x="1576" y="998" class="t">-8</text>
<rect x="1569" y="1016" width="6" height="1" fill="#f0f0f0"/>
<text x="1576" y="1021" class="t">-9</text>
<rect x="1569" y="1039" width="6" height="1" fill="#f0f0f0"/>
<text x="1576" y="1044" class="t">-10</text>
<path d="M1570.5 637 L1577.5 630.5 H1640.5 V643.5 H1577.5 Z" fill="#d3d3d3" stroke="#ffffff" stroke-width="1" shape-rendering="auto"/>
<text x="1577" y="641" class="t" fill="#000" style="fill:#1a1a1a">7,45</text>
<rect x="270" y="1053" width="1" height="6" fill="#f0f0f0"/>
<text x="270" y="1069" class="t" text-anchor="middle">5/1</text>
<rect x="543" y="1053" width="1" height="6" fill="#f0f0f0"/>
<text x="543" y="1069" class="t" text-anchor="middle">5/2</text>
<rect x="891" y="1053" width="1" height="6" fill="#f0f0f0"/>
<text x="891" y="1069" class="t" text-anchor="middle">5/5</text>
<rect x="1218" y="1053" width="1" height="6" fill="#f0f0f0"/>
<text x="1218" y="1069" class="t" text-anchor="middle">5/6</text>
<rect x="1548" y="1053" width="1" height="6" fill="#f0f0f0"/>
<text x="1548" y="1069" class="t" text-anchor="middle">5/7</text>
<rect x="464" y="1058" width="31" height="13" fill="#d3d3d3"/>
<text x="479.5" y="1069" class="t" text-anchor="middle" style="fill:#1a1a1a">16:00</text>
<text x="42" y="319" class="t" text-anchor="middle">8:36</text>
<text x="54" y="334" class="t" text-anchor="middle">9:36</text>
<text x="87" y="421" class="t" text-anchor="middle">11:48</text>
<text x="150" y="317" class="t" text-anchor="middle">16:00</text>
<text x="180" y="426" class="t" text-anchor="middle">18:00</text>
<text x="222" y="283" class="t" text-anchor="middle">20:48</text>
<text x="246" y="430" class="t" text-anchor="middle">22:24</text>
<text x="288" y="314" class="t" text-anchor="middle">3:00</text>
<text x="333" y="362" class="t" text-anchor="middle">6:12</text>
<text x="354" y="331" class="t" text-anchor="middle">7:36</text>
<text x="375" y="366" class="t" text-anchor="middle">9:00</text>
<text x="420" y="306" class="t" text-anchor="middle">12:00</text>
<text x="445" y="360" class="t" text-anchor="middle">13:36</text>
<text x="460" y="332" class="t" text-anchor="middle">14:36</text>
<text x="475" y="367" class="t" text-anchor="middle">15:36</text>
<text x="493" y="333.5" class="t" text-anchor="middle">16:48</text>
<text x="543.5" y="362" class="t" text-anchor="middle">0:00</text>
<text x="562" y="293" class="t" text-anchor="middle">1:24</text>
<text x="594" y="321" class="t" text-anchor="middle">3:48</text>
<text x="591" y="358" class="t" text-anchor="middle">3:36</text>
<text x="621" y="363" class="t" text-anchor="middle">5:48</text>
<text x="636" y="335" class="t" text-anchor="middle">6:48</text>
<text x="649" y="360" class="t" text-anchor="middle">7:36</text>
<text x="660" y="329" class="t" text-anchor="middle">8:24</text>
<text x="700" y="376" class="t" text-anchor="middle">11:12</text>
<text x="799" y="211" class="t" text-anchor="middle">17:48</text>
<text x="840.5" y="524" class="t" text-anchor="middle">20:36</text>
<text x="984.6" y="334.6" class="t" text-anchor="middle">8:12</text>
<text x="1041.5" y="324" class="t" text-anchor="middle">12:12</text>
<text x="1023.6" y="365.5" class="t" text-anchor="middle">11:00</text>
<text x="1080.5" y="383.3" class="t" text-anchor="middle">14:48</text>
<text x="1095" y="331" class="t" text-anchor="middle">15:48</text>
<text x="1110.8" y="313.2" class="t" text-anchor="middle">16:48</text>
<text x="1101.8" y="358" class="t" text-anchor="middle">16:12</text>
<text x="1128.6" y="437" class="t" text-anchor="middle">18:00</text>
<text x="1158.5" y="329" class="t" text-anchor="middle">20:00</text>
<text x="1188.5" y="404" class="t" text-anchor="middle">22:00</text>
<text x="1218.5" y="273" class="t" text-anchor="middle">0:00</text>
<text x="1281" y="361" class="t" text-anchor="middle">6:12</text>
<text x="1299.5" y="319" class="t" text-anchor="middle">7:24</text>
<text x="1347.6" y="380" class="t" text-anchor="middle">10:36</text>
<text x="1368.5" y="314" class="t" text-anchor="middle">12:00</text>
<text x="1452.9" y="442" class="t" text-anchor="middle">17:36</text>
<text x="1539.4" y="318" class="t" text-anchor="middle">23:24</text>
<text x="795.6" y="559" class="t" text-anchor="middle">17:36</text>
<text x="706" y="799.5" class="t" text-anchor="middle">11:36</text>
<text x="909" y="790" class="t" text-anchor="middle">2:24</text>
<text x="714.6" y="835" class="t" text-anchor="middle">12:12</text>
<text x="696.6" y="878" class="t" text-anchor="middle">11:00</text>
<text x="837.4" y="988" class="t" text-anchor="middle">20:24</text>
<text x="933.5" y="952" class="t" text-anchor="middle">4:48</text>
<text x="1107.7" y="789" class="t" text-anchor="middle">16:36</text>
<text x="1119.5" y="1039" class="t" text-anchor="middle">17:24</text>
<text x="1215" y="802" class="t" text-anchor="middle">23:48</text>
<text x="243" y="1014" class="t" text-anchor="middle">22:12</text>
<text x="42" y="712" class="t" text-anchor="middle">8:36</text>
<text x="650" y="803" class="t" text-anchor="middle">12:00</text>
<text x="11" y="72" class="t">FluxHisto(PowerZone 120 1-wks), FluxHisto(PowerZone 120 2-wks), FluxHisto(PowerZone 120 4-wks), FluxHisto(PowerZone 120 6-wks), FluxHisto(PowerZone 120 8-wks)</text>
<text x="16" y="90" class="t" font-weight="bold" style="font-size:10.6px">Flux input data began at: 09.01.2015 18:48:00</text>
<text x="11" y="216" class="t">FluxHisto(AMACD,5, 20 2-wks)</text>
<text x="11" y="554" class="t">FluxHisto(PowerZone 120 2-wks)</text>
<text x="11" y="1050" class="t">© 2015 NinjaTrader, LLC</text>
</svg>
<!-- title bar -->
<div class="abs tx" style="left:0;top:7px;width:1652px;text-align:center;font-size:14px;color:#222;">TF 06-15 (12 Min)&nbsp; 07.05.2015</div>
<div class="abs" style="left:0px;top:0px;width:1652px;height:1px;background:#c9c9c9;"></div>
<div class="abs" style="left:0px;top:0px;width:1px;height:1111px;background:#c9c9c9;"></div>
<div class="abs" style="left:1651px;top:0px;width:1px;height:1111px;background:#c9c9c9;"></div>
<div class="abs" style="left:0px;top:1110px;width:1652px;height:1px;background:#c9c9c9;"></div>
<svg class="abs" style="left:11px;top:8px" width="15" height="15" shape-rendering="crispEdges">
<rect x="0.5" y="0.5" width="14" height="14" fill="#eef1f8" stroke="#8090b8"/>
<path d="M5 1V14M10 1V14M1 5H14M1 10H14" stroke="#b8c4dc"/>
<path d="M1 9 L4 5 L7 7 L10 3 L14 2" stroke="#20b020" stroke-width="1.3" fill="none" shape-rendering="auto"/>
<path d="M1 12 L4 9 L7 6 L10 8 L14 4" stroke="#2060d0" stroke-width="1.3" fill="none" shape-rendering="auto"/>
</svg>
<div class="abs" style="left:1503px;top:0px;width:34px;height:21px;background:#efefef;border:1px solid #2f8cf0;border-top:none;"></div>
<div class="abs tx" style="left:1503px;top:4px;width:34px;text-align:center;font-size:12px;color:#111;">L</div>
<div class="abs" style="left:1556px;top:13px;width:9px;height:2px;background:#111;"></div>
<div class="abs" style="left:1582px;top:7px;width:10px;height:8px;border:1px solid #111;border-top-width:2px;"></div>
<div class="abs" style="left:1600px;top:1px;width:45px;height:20px;background:#c1c1c1;"></div>
<svg class="abs" style="left:1618px;top:7px" width="10" height="9"><path d="M1 0.5 L9 8.5 M9 0.5 L1 8.5" stroke="#fff" stroke-width="1.4"/></svg>
<div class="abs" style="left:8px;top:31px;width:1636px;height:25px;background:linear-gradient(#fefefe,#f6f6f6 60%,#eeeeee);border-radius:3px 3px 0 0;"></div>
<div class="abs" style="left:12px;top:36px;width:2px;height:2px;background:#a8a8a8;"></div>
<div class="abs" style="left:12px;top:39px;width:2px;height:2px;background:#a8a8a8;"></div>
<div class="abs" style="left:12px;top:42px;width:2px;height:2px;background:#a8a8a8;"></div>
<div class="abs" style="left:12px;top:45px;width:2px;height:2px;background:#a8a8a8;"></div>
<div class="abs" style="left:12px;top:48px;width:2px;height:2px;background:#a8a8a8;"></div>
<div class="abs" style="left:20px;top:36px;width:1px;height:16px;background:#c4c4c4;"></div>
<div class="abs" style="left:147px;top:36px;width:1px;height:16px;background:#c4c4c4;"></div>
<div class="abs" style="left:257px;top:36px;width:1px;height:16px;background:#c4c4c4;"></div>
<div class="abs" style="left:315px;top:36px;width:1px;height:16px;background:#c4c4c4;"></div>
<div class="abs tx" style="left:28px;top:36px;font-size:11.5px;color:#111;">TF 06-15</div>
<div class="abs tx" style="left:93px;top:36px;font-size:11.5px;color:#111;">12 Min</div>
<svg class="abs" style="left:79px;top:41px" width="7" height="5"><path d="M0 0H6L3 3.5Z" fill="#111"/></svg>
<svg class="abs" style="left:134px;top:41px" width="7" height="5"><path d="M0 0H6L3 3.5Z" fill="#111"/></svg>
<svg class="abs" style="left:169px;top:41px" width="7" height="5"><path d="M0 0H6L3 3.5Z" fill="#111"/></svg>
<svg class="abs" style="left:199px;top:41px" width="7" height="5"><path d="M0 0H6L3 3.5Z" fill="#111"/></svg>
<svg class="abs" style="left:279px;top:41px" width="7" height="5"><path d="M0 0H6L3 3.5Z" fill="#111"/></svg>
<svg class="abs" style="left:152px;top:35px" width="16" height="18" shape-rendering="crispEdges">
<rect x="1" y="3" width="3" height="12" fill="#30c030" stroke="#222" stroke-width="0.8"/>
<rect x="6" y="2" width="3" height="13" fill="#30c030" stroke="#222" stroke-width="0.8"/>
<rect x="11" y="3" width="3" height="12" fill="#e03030" stroke="#222" stroke-width="0.8"/>
</svg>
<svg class="abs" style="left:182px;top:35px" width="16" height="18"><path d="M2 15 L3 11 L12 2 L15 5 L6 14 Z" fill="#f0d040" stroke="#555" stroke-width="0.8"/><path d="M12 2 L15 5 L14 6 L11 3Z" fill="#e05050"/></svg>
<svg class="abs" style="left:211px;top:34px" width="18" height="19"><circle cx="9" cy="10" r="4.5" fill="#a8d0f0" stroke="#6a7a8a" stroke-width="1.2"/><path d="M5.5 13.5 L1.5 17.5" stroke="#333" stroke-width="2"/><path d="M14 1V7M11 4H17" stroke="#20a040" stroke-width="2"/></svg>
<svg class="abs" style="left:234px;top:34px" width="18" height="19"><circle cx="9" cy="10" r="4.5" fill="#d8d8d8" stroke="#b0b0b0" stroke-width="1.2"/><path d="M5.5 13.5 L1.5 17.5" stroke="#b8b8b8" stroke-width="2"/><path d="M11 4H17" stroke="#b8b8b8" stroke-width="1.5"/></svg>
<svg class="abs" style="left:263px;top:36px" width="15" height="15" shape-rendering="crispEdges"><path d="M7 0V5M7 9V15M0 7H5M9 7H15" stroke="#111" stroke-width="2"/></svg>
<svg class="abs" style="left:292px;top:35px" width="16" height="17"><rect x="1.5" y="0.5" width="14" height="16" fill="#f4f4f4" stroke="#777"/><circle cx="9" cy="8" r="3.8" fill="#a8d0f0" stroke="#6a7a8a"/><path d="M6 11 L2 15" stroke="#333" stroke-width="1.8"/></svg>
<svg class="abs" style="left:320px;top:35px" width="16" height="18" shape-rendering="crispEdges"><path d="M1 3H8M1 12H8" stroke="#20b020" stroke-width="3"/><path d="M1 12H8" stroke="#e03030" stroke-width="3"/><rect x="10" y="3" width="2" height="14" fill="#30c030"/><rect x="13" y="10" width="2" height="7" fill="#e03030"/><path d="M9 4H15M9 8H15M9 12H15" stroke="#aaa" stroke-width="0.6"/></svg>
<svg class="abs" style="left:344px;top:35px" width="16" height="17" shape-rendering="crispEdges"><rect x="0.5" y="0.5" width="15" height="16" fill="#e8e8e8" stroke="#666"/><rect x="3" y="4" width="2" height="10" fill="#30c030"/><rect x="7" y="2" width="2" height="9" fill="#30c030"/><rect x="11" y="5" width="2" height="9" fill="#e03030"/></svg>
<svg class="abs" style="left:367px;top:35px" width="16" height="17"><rect x="0.5" y="0.5" width="15" height="16" fill="#e4e4e4" stroke="#777"/><path d="M2 9 L5 6 L8 8 L11 4 L14 7" stroke="#30b030" fill="none"/><path d="M2 11 L5 10 L8 12 L11 9 L14 11" stroke="#e04040" fill="none"/></svg>
<svg class="abs" style="left:392px;top:35px" width="13" height="17"><path d="M0.5 0.5H9L12.5 4V16.5H0.5Z" fill="#fafafa" stroke="#888"/><text x="6.5" y="13" font-family="Liberation Sans" font-weight="bold" font-size="11" fill="#20a040" text-anchor="middle">$</text></svg>
<svg class="abs" style="left:414px;top:35px" width="15" height="17" shape-rendering="crispEdges"><rect x="0.5" y="0.5" width="14" height="16" fill="#f4f4f4" stroke="#7a8aa8"/><rect x="1" y="1" width="13" height="3" fill="#6a9ad8"/><rect x="2" y="6" width="3" height="9" fill="#9a6ad8"/><path d="M7 7H13M7 10H13M7 13H13" stroke="#aab"/></svg>
<div class="abs" style="left:8px;top:1079px;width:1636px;height:24px;background:#f0f0f0;"></div>
<div class="abs" style="left:1453px;top:1080px;width:174px;height:22px;background:#cdcdcd;"></div>
<svg class="abs" style="left:12px;top:1085px" width="10" height="10"><path d="M7 1.5 L3.5 5 L7 8.5" stroke="#555" stroke-width="1.8" fill="none"/></svg>
<svg class="abs" style="left:1631px;top:1085px" width="10" height="10"><path d="M3 1.5 L6.5 5 L3 8.5" stroke="#555" stroke-width="1.8" fill="none"/></svg>
<div class="abs" style="left:1644px;top:56px;width:7px;height:1054px;background:#ebebeb;"></div>
<svg class="abs" style="left:0;top:0" width="1652" height="1111"><g transform="translate(1021 603) rotate(-15.3) skewX(-12)"><text textLength="352" lengthAdjust="spacingAndGlyphs" font-family="Liberation Sans" font-size="27" fill="#f4606a" stroke="#dcdcdc" stroke-width="2.6" stroke-linejoin="round">www.forex-warez.com</text><text textLength="352" lengthAdjust="spacingAndGlyphs" font-family="Liberation Sans" font-size="27" fill="#f4606a" stroke="#f4606a" stroke-width="0.6">www.forex-warez.com</text></g><g transform="translate(1101 627) rotate(-15.3) skewX(-12)"><text textLength="370" lengthAdjust="spacingAndGlyphs" font-family="Liberation Sans" font-size="27" fill="#f4606a" stroke="#dcdcdc" stroke-width="2.6" stroke-linejoin="round">andreybbrv@gmail.com</text><text textLength="370" lengthAdjust="spacingAndGlyphs" font-family="Liberation Sans" font-size="27" fill="#f4606a" stroke="#f4606a" stroke-width="0.6">andreybbrv@gmail.com</text></g><g transform="translate(1066 682) rotate(-15.3) skewX(-12)"><text textLength="290" lengthAdjust="spacingAndGlyphs" font-family="Liberation Sans" font-size="27" fill="#f4606a" stroke="#dcdcdc" stroke-width="2.6" stroke-linejoin="round">Skype: andreybbrv</text><text textLength="290" lengthAdjust="spacingAndGlyphs" font-family="Liberation Sans" font-size="27" fill="#f4606a" stroke="#f4606a" stroke-width="0.6">Skype: andreybbrv</text></g></svg>
<div class="abs" style="left:75px;top:574px;width:586px;height:411px;background:#ecc76c;border:1px solid #e2b962;"></div>
<div class="abs tx" style="left:75px;top:582px;width:586px;text-align:center;font-size:14.8px;color:#2b2b2b;">Indicators</div>
<div class="abs" style="left:633px;top:580px;width:20px;height:20px;background:#c75050;"></div>
<div class="abs tx" style="left:633px;top:581px;width:20px;text-align:center;font-size:11px;font-weight:bold;color:#fff;line-height:18px;">×</div>
<div class="abs" style="left:82px;top:604px;width:571px;height:373px;background:#f0f0f0;"></div>
<div class="abs" style="left:83px;top:605px;width:570px;height:1px;background:#6d6d6d;"></div>
<div class="abs" style="left:83px;top:605px;width:2px;height:306px;background:#6d6d6d;"></div>
<div class="abs" style="left:82px;top:604px;width:1px;height:307px;background:#a0a0a0;"></div>
<div class="abs" style="left:82px;top:911px;width:571px;height:1px;background:#ffffff;"></div>
<div class="abs" style="left:85px;top:606px;width:275px;height:161px;background:#fff;border-right:1px solid #6d6d6d;border-bottom:1px solid #6d6d6d;"></div>
<div class="abs tx" style="left:89px;top:609.0px;font-size:11px;letter-spacing:-0.15px;color:#000;line-height:14px;">&nbsp;ScalperNinja7</div>
<div class="abs tx" style="left:89px;top:621.95px;font-size:11px;letter-spacing:-0.15px;color:#000;line-height:14px;">ADL</div>
<div class="abs tx" style="left:89px;top:634.9px;font-size:11px;letter-spacing:-0.15px;color:#000;line-height:14px;">ADX</div>
<div class="abs tx" style="left:89px;top:647.85px;font-size:11px;letter-spacing:-0.15px;color:#000;line-height:14px;">ADXR</div>
<div class="abs tx" style="left:89px;top:660.8px;font-size:11px;letter-spacing:-0.15px;color:#000;line-height:14px;">APZ</div>
<div class="abs tx" style="left:89px;top:673.75px;font-size:11px;letter-spacing:-0.15px;color:#000;line-height:14px;">Aroon</div>
<div class="abs tx" style="left:89px;top:686.7px;font-size:11px;letter-spacing:-0.15px;color:#000;line-height:14px;">AroonOscillator</div>
<div class="abs tx" style="left:89px;top:699.65px;font-size:11px;letter-spacing:-0.15px;color:#000;line-height:14px;">ATR</div>
<div class="abs tx" style="left:89px;top:712.6px;font-size:11px;letter-spacing:-0.15px;color:#000;line-height:14px;">BarTimer</div>
<div class="abs tx" style="left:89px;top:725.55px;font-size:11px;letter-spacing:-0.15px;color:#000;line-height:14px;">Bollinger</div>
<div class="abs tx" style="left:89px;top:738.5px;font-size:11px;letter-spacing:-0.15px;color:#000;line-height:14px;">BookMap xRay</div>
<div class="abs tx" style="left:89px;top:751.45px;font-size:11px;letter-spacing:-0.15px;color:#000;line-height:14px;">BOP</div>
<div class="abs" style="left:342px;top:609px;width:16px;height:156px;background:#f0f0f0;"></div>
<div class="abs" style="left:342px;top:626px;width:16px;height:17px;background:#cdcdcd;"></div>
<div class="abs tx" style="left:342px;top:609px;"><svg width="16" height="10"><path d="M4.5 7.5 L8 4 L11.5 7.5" stroke="#606060" stroke-width="1.6" fill="none"/></svg></div>
<div class="abs tx" style="left:342px;top:747px;"><svg width="16" height="10"><path d="M4.5 3 L8 6.5 L11.5 3" stroke="#606060" stroke-width="1.6" fill="none"/></svg></div>
<div class="abs" style="left:85px;top:767px;width:275px;height:4px;background:#ebebeb;"></div>
<div class="abs" style="left:85px;top:771px;width:275px;height:95px;background:#fff;border-top:1px solid #6d6d6d;border-right:1px solid #a0a0a0;border-bottom:1px solid #a0a0a0;"></div>
<div class="abs" style="left:87px;top:773px;width:271px;height:13px;background:#3399ff;"></div>
<div class="abs tx" style="left:89px;top:772.0px;font-size:11px;letter-spacing:-0.15px;color:#fff;line-height:14px;">FluxHisto(PowerZone 120 1-wks)</div>
<div class="abs tx" style="left:89px;top:785.05px;font-size:11px;letter-spacing:-0.15px;color:#000;line-height:14px;">FluxHisto(PowerZone 120 2-wks)</div>
<div class="abs tx" style="left:89px;top:798.1px;font-size:11px;letter-spacing:-0.15px;color:#000;line-height:14px;">FluxHisto(PowerZone 120 4-wks)</div>
<div class="abs tx" style="left:89px;top:811.15px;font-size:11px;letter-spacing:-0.15px;color:#000;line-height:14px;">FluxHisto(PowerZone 120 6-wks)</div>
<div class="abs tx" style="left:89px;top:824.2px;font-size:11px;letter-spacing:-0.15px;color:#000;line-height:14px;">FluxHisto(PowerZone 120 8-wks)</div>
<div class="abs tx" style="left:89px;top:837.25px;font-size:11px;letter-spacing:-0.15px;color:#000;line-height:14px;">FluxHisto(AMACD,5, 20 2-wks)</div>
<div class="abs tx" style="left:89px;top:850.3px;font-size:11px;letter-spacing:-0.15px;color:#000;line-height:14px;">FluxHisto(PowerZone 120 2-wks)</div>
<div class="abs" style="left:110px;top:880px;width:66px;height:23px;background:#f4f4f4;border:1px solid #d5d5d5;"></div>
<div class="abs tx" style="left:110px;top:885px;width:66px;text-align:center;font-size:12px;color:#a3a3a3;">New</div>
<div class="abs" style="left:267px;top:880px;width:66px;height:23px;background:linear-gradient(#f2f2f2,#e3e3e3);border:1px solid #acacac;"></div>
<div class="abs tx" style="left:267px;top:885px;width:66px;text-align:center;font-size:12px;color:#000;">Remove</div>
<div class="abs" style="left:368px;top:606px;width:283px;height:242px;background:#fff;border:1px solid #a0a0a0;"></div>
<div class="abs" style="left:369px;top:607px;width:15px;height:240px;background:#c8c8c8;"></div>
<div class="abs" style="left:384px;top:623px;width:250px;height:1px;background:#d8d8d8;"></div>
<div class="abs" style="left:501px;top:608px;width:1px;height:16px;background:#d8d8d8;"></div>
<div class="abs tx" style="left:386px;top:610px;font-size:11.5px;letter-spacing:-0.1px;color:#000;line-height:14px;width:114px;overflow:hidden;white-space:nowrap;">StochDperiod</div>
<div class="abs tx" style="left:505px;top:610px;font-size:11.5px;font-weight:bold;color:#000;line-height:14px;">7</div>
<div class="abs" style="left:384px;top:639px;width:250px;height:1px;background:#d8d8d8;"></div>
<div class="abs" style="left:501px;top:624px;width:1px;height:16px;background:#d8d8d8;"></div>
<div class="abs tx" style="left:386px;top:626px;font-size:11.5px;letter-spacing:-0.1px;color:#000;line-height:14px;width:114px;overflow:hidden;white-space:nowrap;">StochKperiod</div>
<div class="abs tx" style="left:505px;top:626px;font-size:11.5px;font-weight:bold;color:#000;line-height:14px;">14</div>
<div class="abs" style="left:369px;top:640px;width:265px;height:16px;background:#c8c8c8;"></div>
<div class="abs" style="left:371px;top:644px;width:9px;height:9px;border:1px solid #000;background:#e8e8e8;"></div>
<div class="abs" style="left:373px;top:648px;width:5px;height:1px;background:#000;"></div>
<div class="abs tx" style="left:386px;top:642px;font-size:11.5px;font-weight:bold;color:#000;line-height:14px;">Visual Shifted Histo</div>
<div class="abs" style="left:384px;top:671px;width:250px;height:1px;background:#d8d8d8;"></div>
<div class="abs" style="left:501px;top:656px;width:1px;height:16px;background:#d8d8d8;"></div>
<div class="abs tx" style="left:386px;top:658px;font-size:11.5px;letter-spacing:-0.1px;color:#000;line-height:14px;width:114px;overflow:hidden;white-space:nowrap;">ShiftCurrentHisto</div>
<div class="abs tx" style="left:505px;top:658px;font-size:11.5px;font-weight:bold;color:#000;line-height:14px;">False</div>
<div class="abs" style="left:384px;top:687px;width:250px;height:1px;background:#d8d8d8;"></div>
<div class="abs" style="left:501px;top:672px;width:1px;height:16px;background:#d8d8d8;"></div>
<div class="abs tx" style="left:386px;top:674px;font-size:11.5px;letter-spacing:-0.1px;color:#000;line-height:14px;width:114px;overflow:hidden;white-space:nowrap;">TimeBlockOpacity</div>
<div class="abs tx" style="left:505px;top:674px;font-size:11.5px;font-weight:bold;color:#000;line-height:14px;">5</div>
<div class="abs" style="left:369px;top:688px;width:265px;height:16px;background:#c8c8c8;"></div>
<div class="abs" style="left:371px;top:692px;width:9px;height:9px;border:1px solid #000;background:#e8e8e8;"></div>
<div class="abs" style="left:373px;top:696px;width:5px;height:1px;background:#000;"></div>
<div class="abs tx" style="left:386px;top:690px;font-size:11.5px;font-weight:bold;color:#000;line-height:14px;">Data</div>
<div class="abs" style="left:384px;top:719px;width:250px;height:1px;background:#d8d8d8;"></div>
<div class="abs" style="left:501px;top:704px;width:1px;height:16px;background:#d8d8d8;"></div>
<div class="abs tx" style="left:386px;top:706px;font-size:11.5px;letter-spacing:-0.1px;color:#000;line-height:14px;width:114px;overflow:hidden;white-space:nowrap;">Calculate on bar close</div>
<div class="abs tx" style="left:505px;top:706px;font-size:11.5px;font-weight:bold;color:#000;line-height:14px;">True</div>
<div class="abs" style="left:384px;top:735px;width:250px;height:1px;background:#d8d8d8;"></div>
<div class="abs" style="left:501px;top:720px;width:1px;height:16px;background:#d8d8d8;"></div>
<div class="abs tx" style="left:386px;top:722px;font-size:11.5px;letter-spacing:-0.1px;color:#000;line-height:14px;width:114px;overflow:hidden;white-space:nowrap;">Input series</div>
<div class="abs tx" style="left:505px;top:722px;font-size:11.5px;font-weight:bold;color:#000;line-height:14px;">TF 06-15 (12 Min)</div>
<div class="abs" style="left:384px;top:751px;width:250px;height:1px;background:#d8d8d8;"></div>
<div class="abs" style="left:501px;top:736px;width:1px;height:16px;background:#d8d8d8;"></div>
<div class="abs tx" style="left:386px;top:738px;font-size:11.5px;letter-spacing:-0.1px;color:#000;line-height:14px;width:114px;overflow:hidden;white-space:nowrap;">Maximum bars look bac</div>
<div class="abs tx" style="left:505px;top:738px;font-size:11.5px;font-weight:bold;color:#000;line-height:14px;">TwoHundredFiftySix</div>
<div class="abs" style="left:369px;top:752px;width:265px;height:16px;background:#c8c8c8;"></div>
<div class="abs" style="left:371px;top:756px;width:9px;height:9px;border:1px solid #000;background:#e8e8e8;"></div>
<div class="abs" style="left:373px;top:760px;width:5px;height:1px;background:#000;"></div>
<div class="abs tx" style="left:386px;top:754px;font-size:11.5px;font-weight:bold;color:#000;line-height:14px;">Visual</div>
<div class="abs" style="left:384px;top:783px;width:250px;height:1px;background:#d8d8d8;"></div>
<div class="abs" style="left:501px;top:768px;width:1px;height:16px;background:#d8d8d8;"></div>
<div class="abs tx" style="left:386px;top:770px;font-size:11.5px;letter-spacing:-0.1px;color:#000;line-height:14px;width:114px;overflow:hidden;white-space:nowrap;">Auto scale</div>
<div class="abs tx" style="left:505px;top:770px;font-size:11.5px;font-weight:bold;color:#000;line-height:14px;">False</div>
<div class="abs" style="left:384px;top:799px;width:250px;height:1px;background:#d8d8d8;"></div>
<div class="abs" style="left:501px;top:784px;width:1px;height:16px;background:#d8d8d8;"></div>
<div class="abs tx" style="left:386px;top:786px;font-size:11.5px;letter-spacing:-0.1px;color:#000;line-height:14px;width:114px;overflow:hidden;white-space:nowrap;">Displacement</div>
<div class="abs tx" style="left:505px;top:786px;font-size:11.5px;font-weight:bold;color:#000;line-height:14px;">0</div>
<div class="abs" style="left:384px;top:815px;width:250px;height:1px;background:#d8d8d8;"></div>
<div class="abs" style="left:501px;top:800px;width:1px;height:16px;background:#d8d8d8;"></div>
<div class="abs tx" style="left:386px;top:802px;font-size:11.5px;letter-spacing:-0.1px;color:#000;line-height:14px;width:114px;overflow:hidden;white-space:nowrap;">Display in Data Box</div>
<div class="abs tx" style="left:505px;top:802px;font-size:11.5px;font-weight:bold;color:#000;line-height:14px;">True</div>
<div class="abs" style="left:384px;top:816px;width:117px;height:15px;background:#c8c8c8;"></div>
<div class="abs" style="left:384px;top:831px;width:250px;height:1px;background:#d8d8d8;"></div>
<div class="abs" style="left:501px;top:816px;width:1px;height:16px;background:#d8d8d8;"></div>
<div class="abs tx" style="left:386px;top:818px;font-size:11.5px;letter-spacing:-0.1px;color:#000;line-height:14px;width:114px;overflow:hidden;white-space:nowrap;">Label</div>
<div class="abs tx" style="left:505px;top:818px;font-size:11.5px;font-weight:bold;color:#000;line-height:14px;">Flux Histograms</div>
<div class="abs" style="left:384px;top:847px;width:250px;height:1px;background:#d8d8d8;"></div>
<div class="abs" style="left:501px;top:832px;width:1px;height:16px;background:#d8d8d8;"></div>
<div class="abs tx" style="left:386px;top:834px;font-size:11.5px;letter-spacing:-0.1px;color:#000;line-height:14px;width:114px;overflow:hidden;white-space:nowrap;">Panel</div>
<div class="abs tx" style="left:505px;top:834px;font-size:11.5px;font-weight:bold;color:#000;line-height:14px;">1</div>
<div class="abs" style="left:634px;top:607px;width:16px;height:240px;background:#f0f0f0;"></div>
<div class="abs" style="left:635px;top:654px;width:14px;height:37px;background:#cdcdcd;"></div>
<div class="abs tx" style="left:634px;top:609px;"><svg width="16" height="10"><path d="M4.5 7.5 L8 4 L11.5 7.5" stroke="#606060" stroke-width="1.6" fill="none"/></svg></div>
<div class="abs tx" style="left:634px;top:830px;"><svg width="16" height="10"><path d="M4.5 3 L8 6.5 L11.5 3" stroke="#606060" stroke-width="1.6" fill="none"/></svg></div>
<div class="abs" style="left:368px;top:851px;width:283px;height:60px;background:#f0f0f0;border:1px solid #a0a0a0;"></div>
<div class="abs tx" style="left:373px;top:855px;font-size:12px;font-weight:bold;color:#000;">Label</div>
<div class="abs tx" style="left:373px;top:869px;font-size:11.3px;color:#000;">Gives a minute-by-minute statistical analysis of trend,</div>
<div class="abs tx" style="left:373px;top:882px;font-size:11.3px;color:#000;">trend reversal and open-to-close relationship over th...</div>
<div class="abs" style="left:172px;top:941px;width:79px;height:23px;background:linear-gradient(#ececec,#e2e2e2);border:1px solid #3c8ee6;"></div>
<div class="abs tx" style="left:172px;top:946px;width:79px;text-align:center;font-size:12px;color:#000;">OK</div>
<div class="abs" style="left:329px;top:941px;width:78px;height:23px;background:linear-gradient(#f2f2f2,#e3e3e3);border:1px solid #acacac;"></div>
<div class="abs tx" style="left:329px;top:946px;width:78px;text-align:center;font-size:12px;color:#000;">Apply</div>
<div class="abs" style="left:486px;top:941px;width:78px;height:23px;background:linear-gradient(#f2f2f2,#e3e3e3);border:1px solid #acacac;"></div>
<div class="abs tx" style="left:486px;top:946px;width:78px;text-align:center;font-size:12px;color:#000;">Close</div>
<div class="abs" style="left:648px;top:965px;width:2px;height:2px;background:#b8b8b8;"></div>
<div class="abs" style="left:645px;top:968px;width:2px;height:2px;background:#b8b8b8;"></div>
<div class="abs" style="left:648px;top:968px;width:2px;height:2px;background:#b8b8b8;"></div>
<div class="abs" style="left:642px;top:971px;width:2px;height:2px;background:#b8b8b8;"></div>
<div class="abs" style="left:645px;top:971px;width:2px;height:2px;background:#b8b8b8;"></div>
<div class="abs" style="left:648px;top:971px;width:2px;height:2px;background:#b8b8b8;"></div>
</body></html>
